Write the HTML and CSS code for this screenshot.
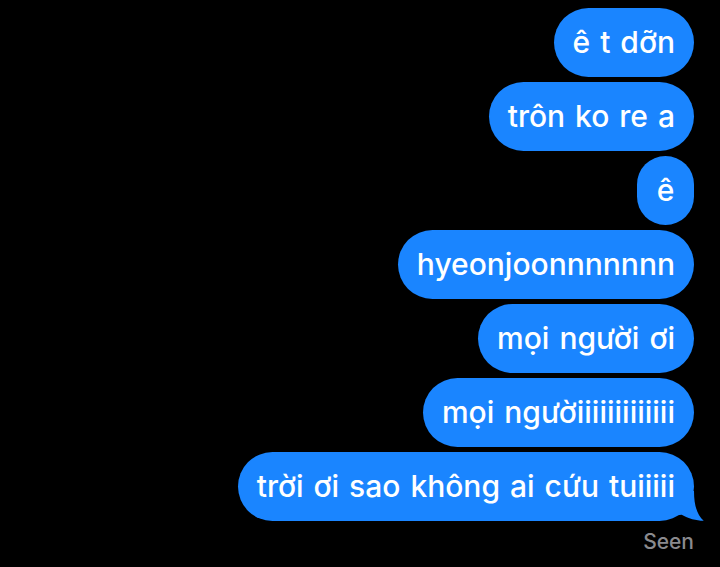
FILE: index.html
```html
<!DOCTYPE html>
<html lang="vi">
<head>
  <meta charset="utf-8">
  <title>Messages</title>
  <link rel="stylesheet" href="styles.css">
</head>
<body>
  <div class="thread">
    <p class="bubble">ê t dỡn</p>
    <p class="bubble">trôn ko re a</p>
    <p class="bubble">ê</p>
    <p class="bubble">hyeonjoonnnnnnn</p>
    <p class="bubble">mọi người ơi</p>
    <p class="bubble">mọi ngườiiiiiiiiiiiii</p>
    <p class="bubble last">trời ơi sao không ai cứu tuiiiii
      <svg class="tail" width="26" height="30" viewBox="0 0 26 30"><path d="M0 0H15C15 14 18 24 24.7 29.7C18 29.8 9 27.5 2.7 23.7L0 24Z" fill="#1a85ff"/></svg>
    </p>
    <p class="seen">Seen</p>
  </div>
</body>
</html>
```

FILE: styles.css
```css
body {
  margin: 0;
  background-color: #000;
  color: white;
  font-family: Inter, "Noto Sans", Arial, sans-serif;
}

.thread {
  display: flex;
  flex-direction: column;
  align-items: flex-end;
  gap: 5px;
  padding: 8px 26px 0 0;
}

.bubble {
  position: relative;
  margin: 0;
  height: 69px;
  line-height: 69px;
  padding: 0 19px;
  min-width: 19px;
  text-align: center;
  background-color: #1a85ff;
  border-radius: 35px;
  font-size: 30px;
  font-weight: 500;
  word-spacing: 2px;
  white-space: nowrap;
}

/* little tail on the last bubble */
.bubble .tail {
  position: absolute;
  right: -11px;
  bottom: 0;
}

.seen {
  margin: 3px 0 0 0;
  font-size: 21px;
  font-weight: 500;
  color: #8a8a8e;
}
```
